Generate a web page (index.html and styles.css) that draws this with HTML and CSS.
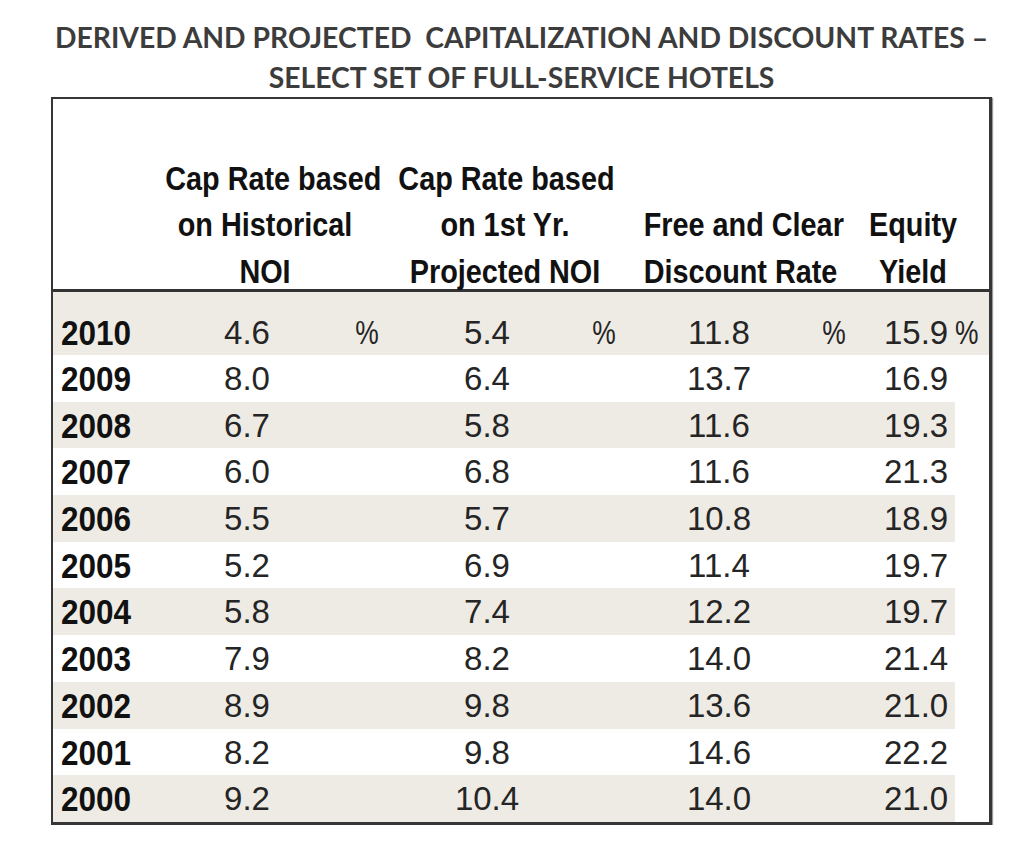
FILE: index.html
```html
<!DOCTYPE html>
<html lang="en">
<head>
<meta charset="utf-8">
<title>Derived and Projected Capitalization and Discount Rates</title>
<link rel="stylesheet" href="styles.css">
</head>
<body>
<div class="wrap">
  <h1 class="title">DERIVED AND PROJECTED&nbsp; CAPITALIZATION AND DISCOUNT RATES –<br>SELECT SET OF FULL-SERVICE HOTELS</h1>
  <div class="table">
    <div class="head">
      <div class="spacer"></div>
      <div class="hcell">Cap Rate based<br>on Historical<br>NOI</div>
      <div class="hcell">Cap Rate based<br>on 1st Yr.<br>Projected NOI</div>
      <div class="hcell">Free and Clear<br>Discount Rate</div>
      <div class="hcell">Equity<br>Yield</div>
    </div>
    <div class="row first shade">
      <div class="yr">2010</div><div class="v">4.6</div><div class="p">%</div><div class="v">5.4</div><div class="p">%</div><div class="v">11.8</div><div class="p">%</div><div class="v4">15.9</div><div class="p4">%</div>
    </div>
    <div class="row">
      <div class="yr">2009</div><div class="v">8.0</div><div class="p"></div><div class="v">6.4</div><div class="p"></div><div class="v">13.7</div><div class="p"></div><div class="v4">16.9</div><div class="p4"></div>
    </div>
    <div class="row shade part">
      <div class="yr">2008</div><div class="v">6.7</div><div class="p"></div><div class="v">5.8</div><div class="p"></div><div class="v">11.6</div><div class="p"></div><div class="v4">19.3</div><div class="p4"></div>
    </div>
    <div class="row">
      <div class="yr">2007</div><div class="v">6.0</div><div class="p"></div><div class="v">6.8</div><div class="p"></div><div class="v">11.6</div><div class="p"></div><div class="v4">21.3</div><div class="p4"></div>
    </div>
    <div class="row shade part">
      <div class="yr">2006</div><div class="v">5.5</div><div class="p"></div><div class="v">5.7</div><div class="p"></div><div class="v">10.8</div><div class="p"></div><div class="v4">18.9</div><div class="p4"></div>
    </div>
    <div class="row">
      <div class="yr">2005</div><div class="v">5.2</div><div class="p"></div><div class="v">6.9</div><div class="p"></div><div class="v">11.4</div><div class="p"></div><div class="v4">19.7</div><div class="p4"></div>
    </div>
    <div class="row shade part">
      <div class="yr">2004</div><div class="v">5.8</div><div class="p"></div><div class="v">7.4</div><div class="p"></div><div class="v">12.2</div><div class="p"></div><div class="v4">19.7</div><div class="p4"></div>
    </div>
    <div class="row">
      <div class="yr">2003</div><div class="v">7.9</div><div class="p"></div><div class="v">8.2</div><div class="p"></div><div class="v">14.0</div><div class="p"></div><div class="v4">21.4</div><div class="p4"></div>
    </div>
    <div class="row shade part">
      <div class="yr">2002</div><div class="v">8.9</div><div class="p"></div><div class="v">9.8</div><div class="p"></div><div class="v">13.6</div><div class="p"></div><div class="v4">21.0</div><div class="p4"></div>
    </div>
    <div class="row">
      <div class="yr">2001</div><div class="v">8.2</div><div class="p"></div><div class="v">9.8</div><div class="p"></div><div class="v">14.6</div><div class="p"></div><div class="v4">22.2</div><div class="p4"></div>
    </div>
    <div class="row shade part last">
      <div class="yr">2000</div><div class="v">9.2</div><div class="p"></div><div class="v">10.4</div><div class="p"></div><div class="v">14.0</div><div class="p"></div><div class="v4">21.0</div><div class="p4"></div>
    </div>
  </div>
</div>
</body>
</html>
```

FILE: styles.css
```css
html, body {
  margin: 0;
  padding: 0;
  background: #ffffff;
}

.wrap {
  width: 941px;
  margin-left: 51px;
  padding-top: 18px;
}

.title {
  margin: 0;
  font-family: Lato, "Open Sans", sans-serif;
  font-weight: 700;
  font-size: 28.3px;
  line-height: 39.5px;
  color: #3c3c3c;
  text-align: center;
  white-space: nowrap;
}

.table {
  border: 2px solid #363636;
  border-right-width: 3px;
  border-bottom-width: 3px;
  box-shadow: 1px 1px 1px #9a9a9a;
  background: #ffffff;
  font-family: "Liberation Sans", Arial, sans-serif;
}

.head {
  display: grid;
  grid-template-columns: 96px 232px 248px 210px 148px;
  align-items: end;
  height: 190px;
  border-bottom: 3px solid #333333;
}

.hcell {
  font-weight: 700;
  font-size: 33.5px;
  line-height: 46.5px;
  color: #111111;
  text-align: center;
  white-space: nowrap;
  margin-bottom: -6px;
  transform: scaleX(0.86);
  transform-origin: center bottom;
}

.row {
  display: grid;
  grid-template-columns: 127px 134px 106px 134px 100px 130px 100px 64px 38px;
  height: 46.7px;
  line-height: 44.7px;
  padding-top: 2px;
  box-sizing: border-box;
  font-size: 33px;
  color: #252525;
}

.row.first {
  height: 63px;
  padding-top: 19px;
}

.shade {
  background: #eeebe4;
}

.shade.part {
  margin-right: 34px;
}

.yr {
  padding-left: 8px;
  font-weight: 700;
  font-size: 35px;
  color: #111111;
  transform: scaleX(0.9);
  transform-origin: 8px center;
}

.v, .p {
  text-align: center;
}

.p {
  transform: scaleX(0.8);
  transform-origin: center center;
}

.v4 {
  text-align: right;
}

.p4 {
  padding-left: 7px;
  transform: scaleX(0.8);
  transform-origin: 7px center;
}
```
